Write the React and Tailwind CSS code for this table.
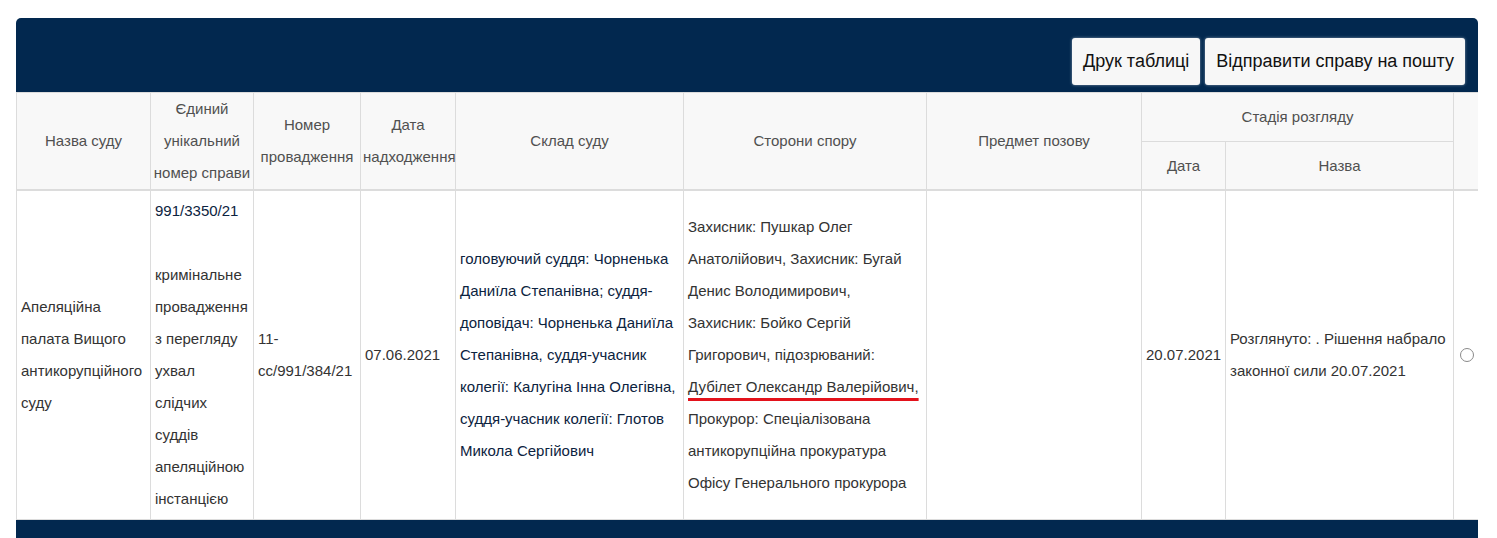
import React from "react";

const th = "border border-[#dcdcdc] px-[2px] font-normal text-[#505050] text-center align-middle leading-[32px]";
const td = "border border-[#dcdcdc] pl-[4px] pr-[3px] py-[4px] align-middle text-left leading-[32px]";

export default function App() {
    return (
        <div className="bg-white min-h-[538px] pt-[18px] px-[16px] pr-[19px] font-['Liberation_Sans',Arial,sans-serif] text-[15px] text-[#333]">
            <div className="rounded-t-[5px] overflow-hidden">
                <div className="bg-[#02284f] h-[74px] flex justify-end items-start pt-[20px] pr-[13px] gap-[5px]">
                    <button className="h-[47px] px-[11px] bg-[#f7f7f7] rounded-[3px] text-[18px] text-[#111] shadow-[0_0_3px_rgba(255,255,255,0.5)]">
                        Друк таблиці
                    </button>
                    <button className="h-[47px] px-[11px] bg-[#f7f7f7] rounded-[3px] text-[18px] text-[#111] shadow-[0_0_3px_rgba(255,255,255,0.5)]">
                        Відправити справу на пошту
                    </button>
                </div>

                <table className="w-full table-fixed border-collapse">
                    <colgroup>
                        <col className="w-[134px]" />
                        <col className="w-[103px]" />
                        <col className="w-[107px]" />
                        <col className="w-[95px]" />
                        <col className="w-[228px]" />
                        <col className="w-[243px]" />
                        <col className="w-[215px]" />
                        <col className="w-[84px]" />
                        <col className="w-[228px]" />
                        <col className="w-[25px]" />
                    </colgroup>
                    <thead className="bg-[#f8f8f8] border-b-2 border-[#dcdcdc]">
                        <tr className="h-[49px]">
                            <th rowSpan={2} className={th}>Назва суду</th>
                            <th rowSpan={2} className={th}>Єдиний унікальний номер справи</th>
                            <th rowSpan={2} className={th}>Номер провадження</th>
                            <th rowSpan={2} className={th}>Дата надходження</th>
                            <th rowSpan={2} className={th}>Склад суду</th>
                            <th rowSpan={2} className={th}>Сторони спору</th>
                            <th rowSpan={2} className={th}>Предмет позову</th>
                            <th colSpan={2} className={th}>Стадія розгляду</th>
                            <th rowSpan={2} className={th}></th>
                        </tr>
                        <tr className="h-[48px]">
                            <th className={th}>Дата</th>
                            <th className={th}>Назва</th>
                        </tr>
                    </thead>
                    <tbody>
                        <tr>
                            <td className={td}>Апеляційна палата Вищого антикорупційного суду</td>
                            <td className={`${td} pl-[3px] pr-[1px]`}>
                                <span className="text-[#0c2340]">991/3350/21</span>
                                <br />
                                <br />
                                кримінальне провадження з перегляду ухвал слідчих суддів апеляційною інстанцією
                            </td>
                            <td className={td}>11-сс/991/384/21</td>
                            <td className={td}>07.06.2021</td>
                            <td className={`${td} text-[#0c2340]`}>
                                головуючий суддя: Чорненька Даниїла Степанівна; суддя-доповідач: Чорненька Даниїла Степанівна, суддя-учасник колегії: Калугіна Інна Олегівна, суддя-учасник колегії: Глотов Микола Сергійович
                            </td>
                            <td className={td}>
                                Захисник: Пушкар Олег
                                <br />
                                Анатолійович, Захисник: Бугай
                                <br />
                                Денис Володимирович,
                                <br />
                                Захисник: Бойко Сергій
                                <br />
                                Григорович, підозрюваний:
                                <br />
                                <span className="underline decoration-[#e3121b] decoration-[3px] underline-offset-[6px]">
                                    Дубілет Олександр Валерійович,
                                </span>
                                <br />
                                Прокурор: Спеціалізована
                                <br />
                                антикорупційна прокуратура
                                <br />
                                Офісу Генерального прокурора
                            </td>
                            <td className={td}></td>
                            <td className={td}>20.07.2021</td>
                            <td className={td}>Розглянуто: . Рішення набрало законної сили 20.07.2021</td>
                            <td className={`${td} px-0`}>
                                <span className="block mx-auto w-[14px] h-[14px] rounded-full border border-[#8a8a8a] bg-white" />
                            </td>
                        </tr>
                    </tbody>
                </table>

                <div className="bg-[#02284f] h-[40px]" />
            </div>
        </div>
    );
}
